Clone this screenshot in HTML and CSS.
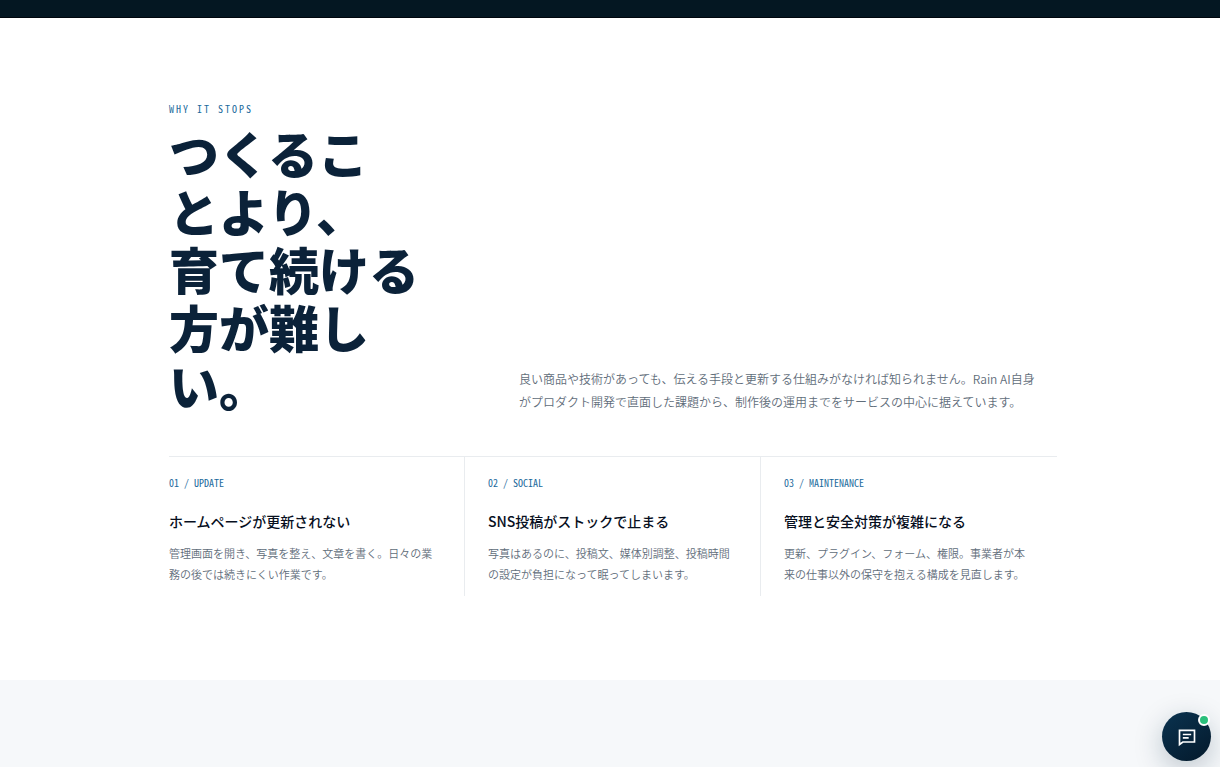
FILE: index.html
```html
<!DOCTYPE html>
<html lang="ja">
<head>
  <meta charset="UTF-8" />
  <meta name="viewport" content="width=device-width, initial-scale=1" />
  <title>Rain AI</title>
  <link rel="stylesheet" href="styles.css">
</head>
<body>
  <div class="hero-end"></div>

  <main>
    <section class="why">
      <div class="container">
        <header class="section-head">
          <div>
            <p class="eyebrow">WHY IT STOPS</p>
            <h2>つくるこ<br>とより、<br>育て続ける<br>方が難し<br>い。</h2>
          </div>
          <p class="lead">良い商品や技術があっても、伝える手段と更新する仕組みがなければ知られません。Rain AI自身がプロダクト開発で直面した課題から、制作後の運用までをサービスの中心に据えています。</p>
        </header>

        <div class="reasons">
          <article class="reason">
            <span class="reason-label">01 / UPDATE</span>
            <h3>ホームページが更新されない</h3>
            <p>管理画面を開き、写真を整え、文章を書く。日々の業務の後では続きにくい作業です。</p>
          </article>
          <article class="reason">
            <span class="reason-label">02 / SOCIAL</span>
            <h3>SNS投稿がストックで止まる</h3>
            <p>写真はあるのに、投稿文、媒体別調整、投稿時間の設定が負担になって眠ってしまいます。</p>
          </article>
          <article class="reason">
            <span class="reason-label">03 / MAINTENANCE</span>
            <h3>管理と安全対策が複雑になる</h3>
            <p>更新、プラグイン、フォーム、権限。事業者が本来の仕事以外の保守を抱える構成を見直します。</p>
          </article>
        </div>
      </div>
    </section>

    <section class="next"></section>
  </main>

  <button class="chat-btn" type="button" aria-label="チャットを開く">
    <svg width="20" height="20" viewBox="0 0 24 24" fill="none" stroke="currentColor" stroke-width="2">
      <path d="M3 4h18v14H7l-4 3z" />
      <path d="M7 9h10M7 13h7" />
    </svg>
    <span class="chat-status"></span>
  </button>
</body>
</html>
```
FILE: styles.css
```css
:root {
  --navy: #0b2239;
  --ink: #070f1e;
  --blue: #1c6a9c;
  --muted: #5f6d7a;
  --line: #e9ecef;
  --mono: "Noto Sans Mono CJK JP", "DejaVu Sans Mono", monospace;
}

* {
  box-sizing: border-box;
}

body {
  display: flex;
  flex-direction: column;
  min-height: 100vh;
  margin: 0;
  color: var(--ink);
  background: #fff;
  font-family: "Noto Sans CJK JP", sans-serif;
}

main {
  display: flex;
  flex: 1;
  flex-direction: column;
}

h2, h3, p {
  margin: 0;
}

.hero-end {
  height: 18px;
  background: #041722;
  border-bottom: 1px solid #00060d;
}

.why {
  padding: 84px 163px 84px 169px;
}

.container {
  max-width: 1180px;
  margin: 0 auto;
}

.section-head {
  display: grid;
  grid-template-columns: 270px 1fr;
  gap: 80px;
  align-items: end;
  margin-bottom: 43px;
}

.eyebrow {
  margin-bottom: 7px;
  color: var(--blue);
  font-family: var(--mono);
  font-size: 10px;
  line-height: 14px;
  letter-spacing: 2px;
}

h2 {
  color: var(--navy);
  font-size: 50px;
  font-weight: 900;
  line-height: 58px;
}

.lead {
  max-width: 522px;
  color: var(--muted);
  font-size: 12px;
  font-weight: 350;
  line-height: 23px;
}

.reasons {
  display: grid;
  grid-template-columns: repeat(3, 1fr);
  border-top: 1px solid var(--line);
}

.reason {
  padding: 19px 23px 11px;
  border-right: 1px solid var(--line);
}

.reason:first-child {
  padding-left: 0;
}

.reason:last-child {
  border-right: 0;
}

.reason-label {
  display: block;
  color: var(--blue);
  font-family: var(--mono);
  font-size: 10px;
  line-height: 14px;
}

h3 {
  margin: 20px 0 11px;
  font-size: 14px;
  font-weight: 500;
  line-height: 22px;
}

.reason p {
  color: var(--muted);
  font-size: 11px;
  font-weight: 350;
  line-height: 21px;
}

.next {
  flex: 1;
  min-height: 80px;
  background: #f6f8fa;
}

.chat-btn {
  position: fixed;
  right: 9px;
  bottom: 6px;
  display: grid;
  place-items: center;
  width: 49px;
  height: 49px;
  padding: 0;
  border: 0;
  border-radius: 50%;
  color: #fff;
  background: linear-gradient(145deg, #0a3350, #04192b);
  box-shadow: 0 8px 28px rgba(10, 42, 67, 0.25);
  cursor: pointer;
}

.chat-status {
  position: absolute;
  top: 2px;
  right: 1px;
  width: 12px;
  height: 12px;
  border: 2px solid #fff;
  border-radius: 50%;
  background: #2abf7b;
}
```
